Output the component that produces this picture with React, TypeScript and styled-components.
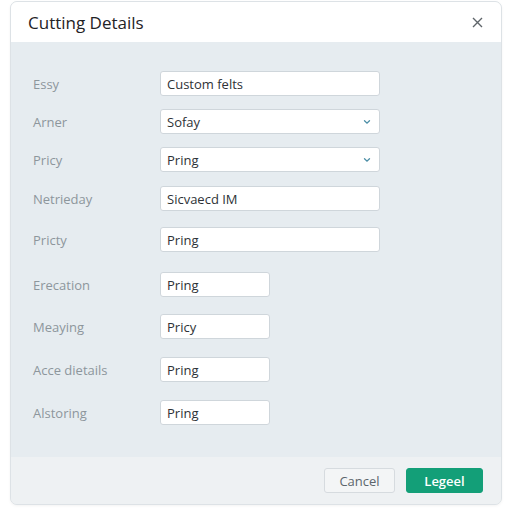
import React from "react";
import styled, { createGlobalStyle } from "styled-components";

const Global = createGlobalStyle`
  html, body { margin: 0; padding: 0; background: #ffffff; }
  body { font-family: "Open Sans", "Liberation Sans", sans-serif; }
  * { box-sizing: border-box; }
`;

const Page = styled.div`
  width: 512px;
  height: 512px;
  padding: 1px 10px 7px 10px;
  display: flex;
`;

const Dialog = styled.div`
  flex: 1;
  display: flex;
  flex-direction: column;
  border: 1px solid #dde2e6;
  border-radius: 7px;
  overflow: hidden;
  background: #eef1f3;
  box-shadow: 0 1px 3px rgba(0, 0, 0, 0.05);
`;

const Header = styled.div`
  height: 40px;
  flex: none;
  background: #ffffff;
  display: flex;
  align-items: center;
  justify-content: space-between;
  padding: 0 17px 0 17px;
`;

const Title = styled.h2`
  margin: 0;
  font-size: 17px;
  font-weight: 400;
  color: #1f2326;
`;

const Close = styled.button`
  border: none;
  background: none;
  padding: 0;
  width: 14px;
  height: 14px;
  display: flex;
  align-items: center;
  justify-content: center;
  color: #6b7176;
`;

const Body = styled.div`
  flex: 1;
  background: #e6ecf0;
  padding: 29px 22px 0 22px;
  display: flex;
  flex-direction: column;
`;

const Row = styled.div<{ $mt: number }>`
  display: flex;
  align-items: center;
  height: 25px;
  margin-top: ${(p) => p.$mt}px;
`;

const Label = styled.label`
  width: 127px;
  flex: none;
  font-size: 13px;
  color: #8d969c;
`;

const Field = styled.div<{ $w: number }>`
  width: ${(p) => p.$w}px;
  height: 25px;
  background: #ffffff;
  border: 1px solid #cfd6db;
  border-radius: 3px;
  display: flex;
  align-items: center;
  justify-content: space-between;
  padding: 0 8px 0 6px;
  font-size: 13px;
  color: #2e3236;
`;

const Footer = styled.div`
  height: 47px;
  flex: none;
  background: #eef1f3;
  display: flex;
  align-items: center;
  justify-content: flex-end;
  gap: 11px;
  padding: 0 18px 0 0;
`;

const Button = styled.button<{ $primary?: boolean }>`
  height: 25px;
  width: ${(p) => (p.$primary ? 77 : 71)}px;
  border-radius: 3px;
  font-family: inherit;
  font-size: 13px;
  border: 1px solid ${(p) => (p.$primary ? "#139f78" : "#d6dbdf")};
  background: ${(p) => (p.$primary ? "#139f78" : "#f3f5f6")};
  color: ${(p) => (p.$primary ? "#ffffff" : "#5c656c")};
  font-weight: ${(p) => (p.$primary ? 600 : 400)};
`;

const Chevron = () => (
  <svg width="8" height="6" viewBox="0 0 8 6">
    <path d="M1.5 1.8 L4 4.2 L6.5 1.8" stroke="#4b8ea6" strokeWidth="1.3" fill="none" strokeLinecap="round" />
  </svg>
);

const rows: { label: string; value: string; w: number; mt: number; select?: boolean }[] = [
  { label: "Essy", value: "Custom felts", w: 220, mt: 0 },
  { label: "Arner", value: "Sofay", w: 220, mt: 13, select: true },
  { label: "Pricy", value: "Pring", w: 220, mt: 13, select: true },
  { label: "Netrieday", value: "Sicvaecd IM", w: 220, mt: 14 },
  { label: "Pricty", value: "Pring", w: 220, mt: 16 },
  { label: "Erecation", value: "Pring", w: 110, mt: 20 },
  { label: "Meaying", value: "Pricy", w: 110, mt: 17 },
  { label: "Acce dietails", value: "Pring", w: 110, mt: 18 },
  { label: "Alstoring", value: "Pring", w: 110, mt: 18 },
];

export default function App() {
  return (
    <>
      <Global />
      <Page>
        <Dialog>
          <Header>
            <Title>Cutting Details</Title>
            <Close aria-label="Close">
              <svg width="11" height="11" viewBox="0 0 11 11">
                <path d="M1 1 L10 10 M10 1 L1 10" stroke="#5f656a" strokeWidth="1.4" />
              </svg>
            </Close>
          </Header>
          <Body>
            {rows.map((r) => (
              <Row key={r.label} $mt={r.mt}>
                <Label>{r.label}</Label>
                <Field $w={r.w}>
                  <span>{r.value}</span>
                  {r.select && <Chevron />}
                </Field>
              </Row>
            ))}
          </Body>
          <Footer>
            <Button>Cancel</Button>
            <Button $primary>Legeel</Button>
          </Footer>
        </Dialog>
      </Page>
    </>
  );
}
